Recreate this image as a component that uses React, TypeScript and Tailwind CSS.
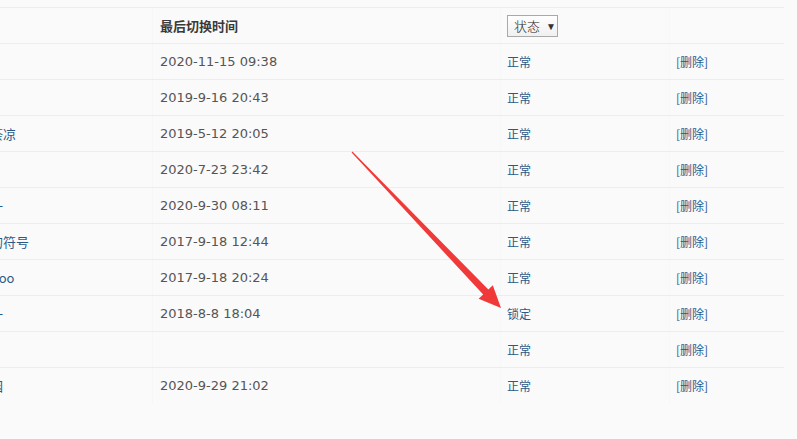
import React from "react";

type Row = { name: string; time: string; status: string };

const rows: Row[] = [
  { name: "管理员", time: "2020-11-15 09:38", status: "正常" },
  { name: "测试用户", time: "2019-9-16 20:43", status: "正常" },
  { name: "用户的昵称叫做花落荼凉", time: "2019-5-12 20:05", status: "正常" },
  { name: "普通会员", time: "2020-7-23 23:42", status: "正常" },
  { name: "测试账号分组序号之一", time: "2020-9-30 08:11", status: "正常" },
  { name: "用户名里面包含特殊的符号", time: "2017-9-18 12:44", status: "正常" },
  { name: "常用邮箱地址雅虎yahoo", time: "2017-9-18 20:24", status: "正常" },
  { name: "默认用户分组编号第一", time: "2018-8-8 18:04", status: "锁定" },
  { name: "访客", time: "", status: "正常" },
  { name: "我的学校是一所好校园", time: "2020-9-29 21:02", status: "正常" },
];

const cjk = { fontFamily: '"Noto Sans CJK SC", "Noto Sans", sans-serif' };
const dejavu = { fontFamily: '"DejaVu Sans", "Noto Sans CJK SC", sans-serif' };

export default function App() {
  return (
    <div className="relative w-[797px] h-[439px] overflow-hidden bg-[#fafafa]">
      <div className="pt-[7px]">
        <div className="-ml-[141px] w-[925px] border-t border-[#ebedf0]">
          {/* header */}
          <div className="flex h-[36px] border-b border-[#ebedf0] items-center">
            <div className="w-[293px] h-full" />
            <div className="w-[348px] h-full flex items-center pl-[7px] border-l border-[#f6f7f8]">
              <span className="text-[13px] font-bold text-[#3a3a3a]" style={cjk}>
                最后切换时间
              </span>
            </div>
            <div className="w-[169px] h-full flex items-center pl-[6px] border-l border-[#f6f7f8]">
              <div className="flex items-center h-[22px] w-[51px] border border-[#a9a9a9] bg-gradient-to-b from-[#ffffff] to-[#f0f0f0] pl-[6px] mt-[1px]">
                <span className="text-[13px] font-light text-[#222]" style={cjk}>
                  状态
                </span>
                <span className="ml-[6px] text-[10px] text-[#333] leading-none">▼</span>
              </div>
            </div>
            <div className="w-[115px] h-full border-l border-[#f6f7f8]" />
          </div>
          {rows.map((r, i) => (
            <div
              key={i}
              className={`flex h-[36px] items-center ${i < rows.length - 1 ? "border-b border-[#ebedf0]" : ""}`}
            >
              <div className="w-[293px] h-full flex items-center pl-[14px] whitespace-nowrap overflow-hidden">
                <span className="text-[13px] text-[#2a5a8a]" style={cjk}>
                  {r.name}
                </span>
              </div>
              <div className="w-[348px] h-full flex items-center pl-[7px] border-l border-[#f6f7f8]">
                <span className="text-[13px] text-[#555]" style={dejavu}>
                  {r.time}
                </span>
              </div>
              <div className="w-[169px] h-full flex items-center pl-[6px] border-l border-[#f6f7f8]">
                <span className="text-[12px] text-[#2a5a8a]" style={cjk}>
                  {r.status}
                </span>
              </div>
              <div className="w-[115px] h-full flex items-center pl-[6px] border-l border-[#f6f7f8]">
                <span className="text-[12px] text-[#2a5a8a]" style={cjk}>
                  [删除]
                </span>
              </div>
            </div>
          ))}
        </div>
      </div>
      <svg
        className="absolute left-0 top-0 pointer-events-none"
        width="797"
        height="439"
        viewBox="0 0 797 439"
      >
        <polygon
          points="351.6,152.4 483.2,294.6 478.6,298.8 501,308 492.8,285.2 488.4,289.6 352.4,151.6"
          fill="#f03a3a"
        />
      </svg>
    </div>
  );
}
